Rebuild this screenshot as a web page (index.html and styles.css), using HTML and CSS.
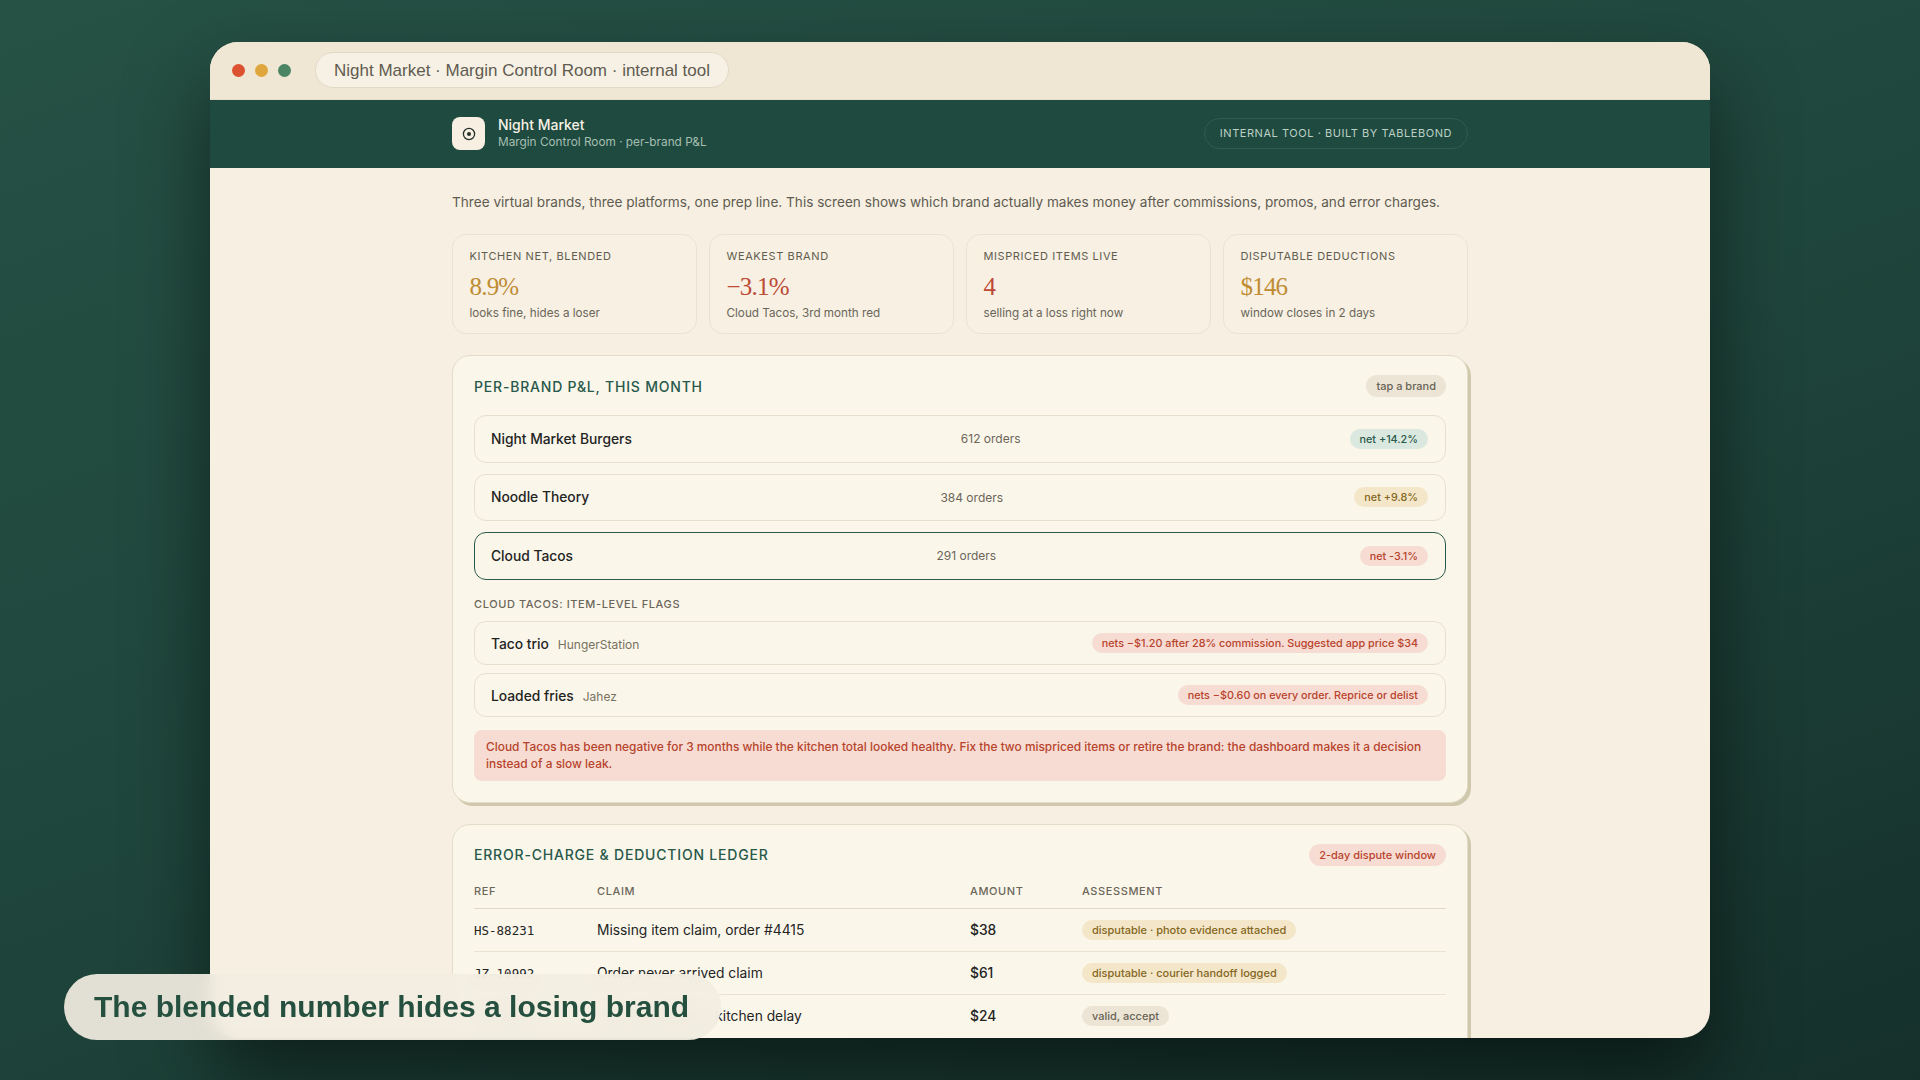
FILE: index.html
```html
<!DOCTYPE html>
<html lang="en">
<head>
    <meta charset="UTF-8">
    <meta name="viewport" content="width=device-width, initial-scale=1.0">
    <title>Night Market · Margin Control Room</title>
    <link rel="stylesheet" href="styles.css">
</head>
<body>
    <div class="window">
        <div class="titlebar">
            <span class="dot dot-red"></span>
            <span class="dot dot-amber"></span>
            <span class="dot dot-green"></span>
            <div class="address">Night Market · Margin Control Room · internal tool</div>
        </div>

        <header class="topbar">
            <div class="topbar-inner">
                <div class="brand">
                    <div class="logo">
                        <svg width="14" height="14" viewBox="0 0 14 14" fill="none">
                            <circle cx="7" cy="7" r="5.6" stroke="#26302b" stroke-width="1.3"/>
                            <circle cx="7" cy="7" r="2" fill="#26302b"/>
                        </svg>
                    </div>
                    <div>
                        <div class="brand-name">Night Market</div>
                        <div class="brand-sub">Margin Control Room · per-brand P&amp;L</div>
                    </div>
                </div>
                <div class="built-by">INTERNAL TOOL · BUILT BY TABLEBOND</div>
            </div>
        </header>

        <main class="content">
            <p class="intro">Three virtual brands, three platforms, one prep line. This screen shows which brand actually makes money after commissions, promos, and error charges.</p>

            <div class="stats">
                <div class="stat">
                    <div class="stat-label">KITCHEN NET, BLENDED</div>
                    <div class="stat-value amber">8.9%</div>
                    <div class="stat-note">looks fine, hides a loser</div>
                </div>
                <div class="stat">
                    <div class="stat-label">WEAKEST BRAND</div>
                    <div class="stat-value red">−3.1%</div>
                    <div class="stat-note">Cloud Tacos, 3rd month red</div>
                </div>
                <div class="stat">
                    <div class="stat-label">MISPRICED ITEMS LIVE</div>
                    <div class="stat-value red">4</div>
                    <div class="stat-note">selling at a loss right now</div>
                </div>
                <div class="stat">
                    <div class="stat-label">DISPUTABLE DEDUCTIONS</div>
                    <div class="stat-value amber">$146</div>
                    <div class="stat-note">window closes in 2 days</div>
                </div>
            </div>

            <section class="panel panel-brands">
                <div class="panel-head">
                    <h2>PER-BRAND P&amp;L, THIS MONTH</h2>
                    <span class="pill pill-grey pill-tall">tap a brand</span>
                </div>

                <div class="brand-row">
                    <span class="row-name">Night Market Burgers</span>
                    <span class="row-orders">612 orders</span>
                    <span class="pill pill-green">net +14.2%</span>
                </div>
                <div class="brand-row">
                    <span class="row-name">Noodle Theory</span>
                    <span class="row-orders">384 orders</span>
                    <span class="pill pill-amber">net +9.8%</span>
                </div>
                <div class="brand-row selected">
                    <span class="row-name">Cloud Tacos</span>
                    <span class="row-orders">291 orders</span>
                    <span class="pill pill-red">net -3.1%</span>
                </div>

                <div class="flags-label">CLOUD TACOS: ITEM-LEVEL FLAGS</div>

                <div class="item-row">
                    <div><span class="row-name">Taco trio</span><span class="platform">HungerStation</span></div>
                    <span class="pill pill-red">nets −$1.20 after 28% commission. Suggested app price $34</span>
                </div>
                <div class="item-row">
                    <div><span class="row-name">Loaded fries</span><span class="platform">Jahez</span></div>
                    <span class="pill pill-red">nets −$0.60 on every order. Reprice or delist</span>
                </div>

                <div class="alert">Cloud Tacos has been negative for 3 months while the kitchen total looked healthy. Fix the two mispriced items or retire the brand: the dashboard makes it a decision instead of a slow leak.</div>
            </section>

            <section class="panel">
                <div class="panel-head">
                    <h2>ERROR-CHARGE &amp; DEDUCTION LEDGER</h2>
                    <span class="pill pill-red pill-tall">2-day dispute window</span>
                </div>

                <table class="ledger">
                    <thead>
                        <tr>
                            <th class="col-ref">REF</th>
                            <th class="col-claim">CLAIM</th>
                            <th class="col-amount">AMOUNT</th>
                            <th>ASSESSMENT</th>
                        </tr>
                    </thead>
                    <tbody>
                        <tr>
                            <td class="ref">HS-88231</td>
                            <td>Missing item claim, order #4415</td>
                            <td class="amount">$38</td>
                            <td><span class="pill pill-amber">disputable · photo evidence attached</span></td>
                        </tr>
                        <tr>
                            <td class="ref">JZ-10992</td>
                            <td>Order never arrived claim</td>
                            <td class="amount">$61</td>
                            <td><span class="pill pill-amber">disputable · courier handoff logged</span></td>
                        </tr>
                        <tr>
                            <td class="ref">HS-88107</td>
                            <td>Late cancellation, kitchen delay</td>
                            <td class="amount">$24</td>
                            <td><span class="pill pill-grey">valid, accept</span></td>
                        </tr>
                    </tbody>
                </table>
            </section>
        </main>
    </div>

    <div class="caption">The blended number hides a losing brand</div>
</body>
</html>
```

FILE: styles.css
```css
* {
    box-sizing: border-box;
}
html, body {
    height: 100%;
}
body {
    margin: 0;
    padding: 42px 210px;
    overflow: hidden;
    font-family: "Inter", "Liberation Sans", sans-serif;
    color: #23241f;
    background: linear-gradient(160deg, #265145 0%, #1f463c 50%, #15302a 100%);
}

/* browser window */
.window {
    height: 996px;
    display: flex;
    flex-direction: column;
    overflow: hidden;
    border-radius: 28px;
    background: #f6efe2;
    box-shadow: 0 40px 80px rgba(0, 0, 0, 0.5);
}
.titlebar {
    flex: none;
    height: 58px;
    display: flex;
    align-items: center;
    gap: 10px;
    padding: 0 0 1px 22px;
    background: #efe6d4;
    border-bottom: 1px solid #e4ddcc;
}
.dot {
    width: 13px;
    height: 13px;
    border-radius: 50%;
}
.dot-red {
    background: #dc5230;
}
.dot-amber {
    background: #e0a63e;
}
.dot-green {
    background: #4b8563;
}
.address {
    height: 36px;
    line-height: 35px;
    margin-left: 14px;
    padding: 0 18px;
    font-family: "Liberation Sans", sans-serif;
    font-size: 17px;
    color: #5f5b50;
    background: #f7f1e5;
    border: 1px solid #e2d9c6;
    border-radius: 18px;
}

/* dark header */
.topbar {
    flex: none;
    height: 68px;
    padding-bottom: 1px;
    display: flex;
    justify-content: center;
    align-items: center;
    background: #1f4a40;
}
.topbar-inner {
    width: 1016px;
    display: flex;
    justify-content: space-between;
    align-items: center;
}
.brand {
    display: flex;
    align-items: center;
    gap: 13px;
}
.logo {
    width: 33px;
    height: 33px;
    display: flex;
    align-items: center;
    justify-content: center;
    background: #f6efe2;
    border-radius: 8px;
}
.brand-name {
    font-size: 14px;
    font-weight: 500;
    line-height: 18px;
    color: #f7f1e5;
}
.brand-sub {
    font-size: 11.8px;
    line-height: 17px;
    color: #a5bfb1;
}
.built-by {
    height: 31px;
    line-height: 29px;
    padding: 0 15px;
    font-size: 11px;
    letter-spacing: 0.55px;
    color: #bcd0c4;
    border: 1px solid rgba(255, 255, 255, 0.09);
    border-radius: 16px;
}

/* page body */
.content {
    width: 1016px;
    margin: 0 auto;
    flex: none;
}
.intro {
    margin: 24px 0 0;
    font-size: 13.6px;
    line-height: 20px;
    white-space: nowrap;
    color: #5f5b50;
}
.stats {
    display: grid;
    grid-template-columns: repeat(4, 1fr);
    gap: 12px;
    margin-top: 22px;
}
.stat {
    height: 100px;
    padding: 13px 16.5px 0;
    background: #f7f0e3;
    border: 1px solid #ebe3d2;
    border-radius: 14px;
}
.stat-label {
    font-size: 11px;
    line-height: 16px;
    letter-spacing: 0.6px;
    color: #625d50;
}
.stat-value {
    margin-top: 7px;
    font-family: "Liberation Serif", serif;
    font-size: 25px;
    line-height: 31px;
    letter-spacing: -0.8px;
}
.stat-note {
    margin-top: 2px;
    font-size: 11.7px;
    line-height: 18px;
    color: #6b665a;
}
.amber {
    color: #c08c33;
}
.red {
    color: #bd4a33;
}

/* panels */
.panel {
    width: 1016px;
    padding: 19px 21px 21px;
    background: #fbf6ea;
    border: 1px solid #e3dcc9;
    border-radius: 18px;
    box-shadow: 3px 3px 0 #cfc8ac;
}
.panel-brands {
    margin-top: 21px;
    margin-bottom: 21px;
}
.panel-head {
    display: flex;
    justify-content: space-between;
    align-items: center;
    height: 22px;
}
.panel h2 {
    margin: 0;
    font-size: 14px;
    font-weight: 500;
    letter-spacing: 0.8px;
    color: #28594a;
}
.pill {
    display: inline-block;
    height: 20px;
    line-height: 21px;
    padding: 0 10px;
    font-size: 11px;
    font-weight: 500;
    border-radius: 10px;
    white-space: nowrap;
}
.pill-tall {
    height: 22px;
    line-height: 23px;
    border-radius: 11px;
}
.pill-green {
    color: #2a5a4b;
    background: #dbe8df;
}
.pill-amber {
    color: #856722;
    background: #f3e6c9;
}
.pill-red {
    color: #b8432c;
    background: #f6dcd3;
}
.pill-grey {
    color: #686355;
    background: #ece5d6;
}

.brand-row, .item-row {
    display: flex;
    justify-content: space-between;
    align-items: center;
    padding: 0 17px 0 16px;
    border: 1px solid #e6dfce;
    border-radius: 12px;
}
.brand-row .pill, .item-row .pill {
    font-size: 10.8px;
}
.brand-row {
    height: 47.5px;
    margin-top: 11px;
}
.panel-head + .brand-row {
    margin-top: 18px;
}
.brand-row.selected {
    border: 1.5px solid #2a5a4b;
}
.row-name {
    font-size: 13.8px;
    font-weight: 550;
    color: #23241f;
}
.row-orders {
    font-size: 12px;
    color: #6b665a;
}
.flags-label {
    margin-top: 16px;
    margin-bottom: 9px;
    font-size: 11px;
    line-height: 16px;
    font-weight: 500;
    letter-spacing: 0.6px;
    color: #6b665a;
}
.item-row {
    height: 44px;
    margin-top: 8px;
}
.flags-label + .item-row {
    margin-top: 0;
}
.platform {
    margin-left: 9px;
    font-size: 12px;
    color: #77725f;
}
.alert {
    margin-top: 13px;
    padding: 8px 12px 9px;
    font-size: 11.9px;
    line-height: 17px;
    font-weight: 500;
    color: #b8432c;
    background: #f6dcd3;
    border-radius: 8px;
}

/* ledger table */
.ledger {
    width: 100%;
    margin-top: 16px;
    border-collapse: collapse;
    table-layout: fixed;
}
.ledger th {
    height: 27px;
    padding: 0 0 8px;
    text-align: left;
    font-size: 11px;
    font-weight: 500;
    letter-spacing: 0.6px;
    color: #6b665a;
    border-bottom: 1px solid #e0d9c8;
}
.ledger td {
    height: 43.2px;
    padding: 0;
    font-size: 13.8px;
    border-bottom: 1px solid #e9e2d1;
}
.col-ref {
    width: 123px;
}
.col-claim {
    width: 373px;
}
.col-amount {
    width: 112px;
}
.ledger .ref {
    font-family: "DejaVu Sans Mono", monospace;
    font-size: 12.5px;
}
.ledger .amount {
    font-weight: 500;
}

/* caption over the window */
.caption {
    position: absolute;
    left: 64px;
    top: 974px;
    width: 657px;
    height: 66px;
    padding-left: 30px;
    line-height: 66px;
    white-space: nowrap;
    font-family: "Liberation Sans", sans-serif;
    font-size: 30px;
    font-weight: 700;
    color: #25503f;
    background: rgba(243, 238, 226, 0.92);
    backdrop-filter: blur(8px);
    border-radius: 33px;
}
```
